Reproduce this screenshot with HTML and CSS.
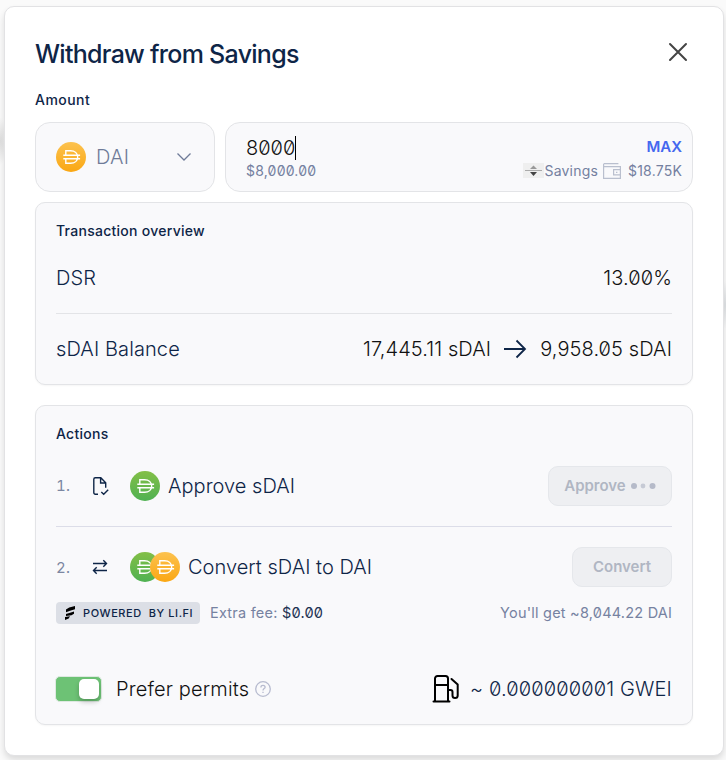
FILE: index.html
```html
<!DOCTYPE html>
<html lang="en">
<head>
<meta charset="utf-8">
<title>Withdraw from Savings</title>
<link rel="stylesheet" href="styles.css">
</head>
<body>
<svg width="0" height="0" class="defs" aria-hidden="true">
  <defs>
    <linearGradient id="gold" x1="0" y1="0" x2="0" y2="1"><stop offset="0" stop-color="#fcc24f"/><stop offset="1" stop-color="#faa713"/></linearGradient>
    <linearGradient id="green" x1="0" y1="0" x2="0" y2="1"><stop offset="0" stop-color="#83bf47"/><stop offset="1" stop-color="#4fb152"/></linearGradient>
    <g id="dai" fill="none" stroke="#fff" stroke-width="1.4">
      <path d="M9.800 13.300V8.700h4.700c4.300 0 7.200 2.500 7.200 6.300s-2.900 6.300-7.200 6.300H9.800v-4.600M7.300 13.300h16.800M7.300 16.700h16.800"/>
    </g>
  </defs>
</svg>
<main class="dialog">
  <header class="head">
    <h1>Withdraw from Savings</h1>
    <svg class="close" width="20" height="20" viewBox="0 0 20 20"><path d="M2 2l16 16M18 2L2 18"/></svg>
  </header>
  <h2 class="amount-label">Amount</h2>
  <div class="amount">
    <div class="token">
      <svg width="30" height="30" viewBox="0 0 30 30"><circle cx="15" cy="15" r="15" fill="url(#gold)"/><use href="#dai"/></svg>
      <span class="token-name">DAI</span>
      <svg class="chevron" width="16" height="10" viewBox="0 0 16 10"><path d="M1.500 1.500L8 8l6.500-6.500"/></svg>
    </div>
    <div class="entry">
      <div class="entry-row"><span class="value">8000</span><span class="max">MAX</span></div>
      <div class="entry-row small">
        <span>$8,000.00</span>
        <span class="balance">
          <svg class="source" width="21" height="15" viewBox="0 0 21 15"><path fill="#efefef" d="M0 0h21v15H0z"/><path fill="#999" d="M7 6L10.500 2.500 14 6z"/><path stroke="#aaa" d="M2 7.500h17"/><path fill="#444" d="M7 9h7L10.500 13z"/></svg>
          <span class="savings">Savings</span>
          <svg class="wallet" width="18" height="16" viewBox="0 0 18 16"><path d="M.6 1v14.300h16.800V3.700H.6M.6.700h14.800M17.300 6.700h-6.700v5.200h6.700M13 9.300h1.400"/></svg>
          <span class="funds">$18.75K</span>
        </span>
      </div>
    </div>
  </div>

  <section class="panel overview">
    <h2>Transaction overview</h2>
    <div class="row dsr"><span>DSR</span><span class="figure">13.00%</span></div>
    <div class="row sdai">
      <span class="sdai-label">sDAI Balance</span>
      <span class="change"><span class="from">17,445.11 sDAI</span>
        <svg class="arrow" width="24" height="20" viewBox="0 0 24 20"><path d="M1 10h21M13.500 1.500L22 10l-8.500 8.500"/></svg>
        <span class="to">9,958.05 sDAI</span></span>
    </div>
  </section>

  <section class="panel actions">
    <h2>Actions</h2>
    <div class="step">
      <span class="num">1.</span>
      <svg class="step-icon" width="18" height="20" viewBox="0 0 18 20"><path d="M6 18.300H3.300A1.500 1.500 0 0 1 1.800 16.800V3.200A1.500 1.500 0 0 1 3.300 1.700h5.500l4.900 5v5M8.600 2v5h5M9.300 16l2.400 2.300 4.500-4.500"/></svg>
      <svg class="coin" width="30" height="30" viewBox="0 0 30 30"><circle cx="15" cy="15" r="15" fill="url(#green)"/><use href="#dai"/></svg>
      <span class="step-name approve-name">Approve sDAI</span>
      <button class="approve" disabled>Approve<svg width="26" height="8" viewBox="0 0 26 8"><circle cx="4" cy="4" r="3"/><circle cx="13" cy="4" r="2.400" opacity=".7"/><circle cx="22.500" cy="4" r="3"/></svg></button>
    </div>
    <div class="step second">
      <span class="num">2.</span>
      <svg class="step-icon" width="18" height="20" viewBox="0 0 18 20"><path d="M1 6.500h13.500M11.300 3.300l3.200 3.200-3.200 3.200M15 13.500H1.500M4.700 10.300l-3.200 3.200 3.200 3.200"/></svg>
      <svg class="coin" width="50" height="30" viewBox="0 0 50 30"><circle cx="15" cy="15" r="15" fill="url(#green)"/><use href="#dai"/><circle cx="35" cy="15" r="15" fill="url(#gold)"/><use href="#dai" x="20"/></svg>
      <span class="step-name convert-name">Convert sDAI to DAI</span>
      <button class="convert" disabled>Convert</button>
    </div>
    <div class="fees">
      <span class="badge"><svg width="10" height="14" viewBox="0 0 10 14"><path d="M10 0v3.300L5 4.800 1 6.200V3.500L4.200 1.500zM3.500 7.200L9 5.600v2.200L6.500 9.200 1 10V8zM0 10.900l5-.6-1.300 2.200L0 14z"/></svg><span>POWERED&nbsp; BY LI.FI</span></span>
      <span class="extra">Extra fee: <b>$0.00</b></span>
      <span class="receive">You'll get ~8,044.22 DAI</span>
    </div>
    <div class="footer">
      <span class="switch"><span class="knob"></span></span>
      <span class="prefer">Prefer permits</span>
      <svg class="help" width="16" height="16" viewBox="0 0 16 16"><circle cx="8" cy="8" r="7.300"/><path d="M5.900 6.400C5.900 5 6.800 4.300 8 4.300s2.100.8 2.100 1.900C10.100 7.500 8 7.800 8 9.400M8 10.800v1.200"/></svg>
      <svg class="gas" width="28" height="30" viewBox="0 0 28 30"><path d="M3 27V4.500A2.500 2.500 0 0 1 5.500 2h8A2.500 2.500 0 0 1 16 4.500V27M1.500 27.500h16M3 11h13M16 16h2.500A2 2 0 0 1 20.500 18v3.500a2.400 2.400 0 0 0 5.200 0V10.500L19.500 5"/></svg>
      <span class="gwei">~ 0.000000001 GWEI</span>
    </div>
  </section>
</main>
</body>
</html>
```
FILE: styles.css
```css
* { box-sizing: border-box; }
body {
  margin: 0;
  height: 760px;
  overflow: hidden;
  padding: 6px 2px 4px 4px;
  background:
    radial-gradient(ellipse 8px 24px at 0 141px, #dedede, transparent),
    radial-gradient(ellipse 8px 24px at 726px 305px, #dde0e3, transparent),
    #fafafa;
  font-family: Inter, "Liberation Sans", sans-serif;
  font-feature-settings: "zero";
  color: #0e2547;
}
.defs { position: absolute; }
svg { display: block; flex: none; }
h1, h2 { margin: 0; }
.dialog {
  width: 720px;
  height: 750px;
  padding: 31px 30px 0;
  background: #fff;
  border: 1px solid #e2e2e4;
  border-radius: 10px;
  box-shadow: 0 4px 6px rgba(0, 0, 0, .12);
}
.head { display: flex; justify-content: space-between; align-items: flex-start; height: 54px; }
h1 { font-size: 25px; line-height: 32px; font-weight: 500; letter-spacing: -.72px; }
.close { margin: 4px 5px 0 0; fill: none; stroke: #444; stroke-width: 2; stroke-linecap: round; }
h2 { font-size: 14px; line-height: 20px; font-weight: 500; letter-spacing: .27px; }
.amount-label { margin-top: -2px; letter-spacing: .45px; }
.amount { display: flex; gap: 10px; margin-top: 12px; height: 70px; }
.token, .entry, .panel { background: #f9f9fb; border: 1px solid #e3e4e7; width: 658px; }
.token, .entry { border-radius: 15px; }
.token { width: 180px; display: flex; align-items: center; padding: 0 22px 0 20px; }
.token-name { margin-left: 10px; font-size: 20px; font-weight: 300; letter-spacing: .2px; color: #6f7b98; }
.chevron { margin-left: auto; fill: none; stroke: #6f7b98; stroke-width: 1.3; }
.entry { width: 468px; padding: 12px 10px 0 20px; }
.entry-row { display: flex; justify-content: space-between; align-items: center; height: 24px; }
.value { font-size: 20px; line-height: 24px; margin-top: 2px; font-weight: 300; color: #111; border-right: 1px solid #000; }
.max { margin-top: -2px; font-size: 15px; font-weight: 600; color: #4468ef; }
.small { font-size: 14px; line-height: 22px; font-weight: 400; letter-spacing: .2px; color: #7480a0; height: 23px; }
.balance { display: flex; align-items: center; }
.wallet { margin: 0 7px 0 5px; fill: none; stroke: #b9bfce; stroke-width: 1.2; }
.panel { border-radius: 10px; padding: 18px 20px 0; box-shadow: 0 1px 2px rgba(0, 0, 0, .04); }
.overview { height: 183px; margin-top: 10px; }
.row { display: flex; justify-content: space-between; align-items: center; font-size: 20px; font-weight: 300; letter-spacing: .1px; }
.dsr { height: 73px; padding-top: 1px; border-bottom: 1px solid #e3e4e7; }
.sdai { height: 70px; }
.figure, .from, .to { color: #111; }
.change { display: flex; align-items: center; }
.arrow { margin: 0 13px 0 12px; fill: none; stroke: #0e2547; stroke-width: 1.8; }
.actions { height: 320px; margin-top: 20px; }
.step { display: flex; align-items: center; height: 83px; padding-top: 1px; border-bottom: 1px solid #dcdde8; }
.second { height: 80px; padding: 0; border: 0; }
.num { width: 36px; font-size: 15px; font-weight: 400; font-variant-numeric: tabular-nums; letter-spacing: .2px; color: #7c87a2; }
.step-icon { fill: none; stroke: #0e2547; stroke-width: 1.4; }
.coin { margin-left: 20px; }
.step-name { margin-left: 8px; font-size: 20px; font-weight: 300; letter-spacing: .03px; }
button { font: 600 15px/20px Inter, sans-serif; height: 40px; margin-left: auto; padding: 0; border: 1px solid #e5e7eb; border-radius: 10px; background: #eeeff2; color: #b0b6c3; display: flex; align-items: center; justify-content: center; }
.approve { width: 124px; }
.approve svg { margin-left: 4px; fill: #b5bac9; }
.convert { width: 100px; }
.fees { display: flex; align-items: center; height: 22px; margin-top: -5px; font-size: 14.5px; line-height: 20px; font-weight: 400; letter-spacing: .22px; color: #7682a1; }
.badge { width: 144px; height: 22px; display: flex; align-items: center; padding-left: 9px; border-radius: 4px; background: #dcdfe6; color: #0e2547; font-size: 11px; font-weight: 500; letter-spacing: .57px; white-space: nowrap; }
.badge svg { fill: #000; margin-right: 8px; }
.extra { margin-left: 10px; }
.extra b { font-weight: 400; color: #1c3152; }
.receive { margin-left: auto; margin-right: -.2px; }
.footer { display: flex; align-items: center; height: 30px; margin-top: 50px; font-size: 20px; font-weight: 300; letter-spacing: .15px; }
.switch { width: 47px; height: 26px; display: flex; justify-content: flex-end; padding: 3px 2px; border-radius: 5px; background: #6dc275; border: 1px solid #dfe9e2; margin-left: -1px; }
.knob { width: 20px; height: 20px; margin-top: -1px; border-radius: 5px; background: #fff; box-shadow: 0 3px 5px rgba(0, 0, 0, .22); }
.prefer { margin-left: 14px; color: #111; }
.help { margin-left: 6px; fill: none; stroke: #b7bbcf; stroke-width: 1.3; }
.gas { margin-left: auto; fill: none; stroke: #000; stroke-width: 2; stroke-linecap: round; stroke-linejoin: round; }
.gwei { margin-left: 10px; }
```
